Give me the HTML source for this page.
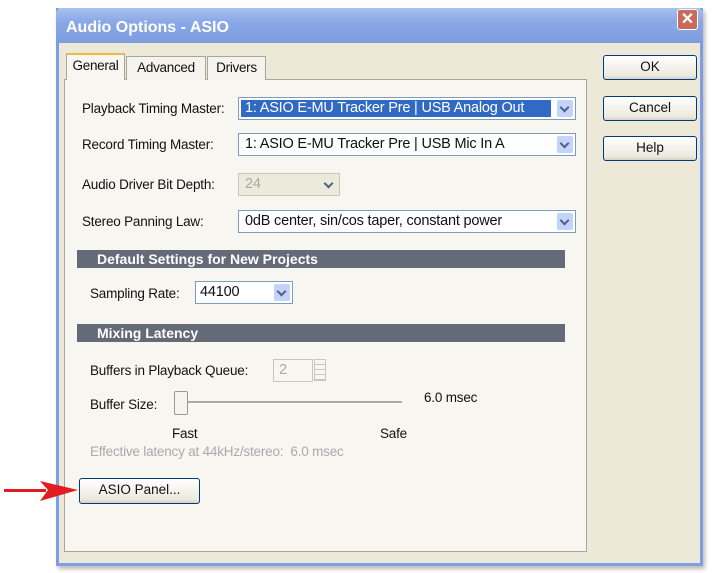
<!DOCTYPE html>
<html><head><style>
body{margin:0;width:715px;height:573px;background:#fff;position:relative;overflow:hidden;font-family:"Liberation Sans",sans-serif;font-size:13.5px;color:#111}
.a{position:absolute}
.dlg{left:56px;top:8px;width:647px;height:558px;background:#ece9d8;border:3px solid #7f9de0;border-top:none;box-sizing:border-box;box-shadow:2px 3px 4px #bbb}
.title{left:56px;top:8px;width:647px;height:35px;background:linear-gradient(#a9c1ef,#8aa8e6 40%,#7d9de0);border-radius:6px 6px 0 0}
.panel{left:64px;top:79px;width:523px;height:473px;background:#f7f6f1;border:1px solid #a8a69a;box-sizing:border-box}
.tab{top:56px;height:24px;background:#f4f3ee;border:1px solid #a8a69a;border-bottom:none;box-sizing:border-box;font-size:13.5px;text-align:center;line-height:22px;letter-spacing:-0.3px}
.sel{height:23px;background:#fff;border:1px solid #7f9db9;box-sizing:border-box;line-height:20px;padding-left:6px;font-size:14.5px;letter-spacing:-0.2px;white-space:nowrap}
.arr{position:absolute;right:2px;top:2px;width:16px;height:17px;background:#c3d3fb;border-radius:2px}
.arr:after{content:"";position:absolute;left:4px;top:4px;width:5px;height:5px;border-right:2px solid #4d6185;border-bottom:2px solid #4d6185;transform:rotate(45deg)}
.btn{height:25px;border:1px solid #003c74;border-radius:3px;background:linear-gradient(#fff,#ece9df 85%,#d6d0c5);box-sizing:border-box;text-align:center;line-height:22px;font-size:13.5px}
.bar{left:77px;width:488px;height:18px;background:#646a78;color:#fff;font-weight:bold;font-size:14px;line-height:18px;padding-left:20px;box-sizing:border-box}
.lbl{font-size:13.5px;letter-spacing:-0.2px;white-space:nowrap}
</style></head><body>
<div class="a dlg"></div>
<div class="a title"></div>
<div class="a" style="left:66px;top:19px;color:#fff;font-weight:bold;font-size:16px">Audio Options - ASIO</div>
<div class="a" style="left:677px;top:9px;width:21px;height:21px;background:#c86a5c;border:1px solid #fff;box-sizing:border-box;border-radius:3px;color:#fff;font-weight:bold;font-size:16px;text-align:center;line-height:19px">✕</div>
<div class="a panel"></div>
<div class="a tab" style="left:66px;top:53px;height:27px;width:59px;background:#f7f6f1;border-top:2px solid #f0b845">General</div>
<div class="a tab" style="left:126px;width:80px">Advanced</div>
<div class="a tab" style="left:207px;width:59px">Drivers</div>
<div class="a btn" style="left:603px;top:55px;width:94px">OK</div>
<div class="a btn" style="left:603px;top:96px;width:94px">Cancel</div>
<div class="a btn" style="left:603px;top:136px;width:94px">Help</div>

<div class="a lbl" style="left:82px;top:101px">Playback Timing Master:</div>
<div class="a sel" style="left:238px;top:97px;width:338px;padding-left:2px"><span style="background:#316ac5;color:#fff;display:inline-block;width:306px;padding-left:4px;line-height:17px;margin-top:1px">1: ASIO E-MU Tracker Pre | USB Analog Out</span><div class="arr"></div></div>
<div class="a lbl" style="left:82px;top:137px">Record Timing Master:</div>
<div class="a sel" style="left:238px;top:133px;width:338px">1: ASIO E-MU Tracker Pre | USB Mic In A<div class="arr"></div></div>
<div class="a lbl" style="left:82px;top:177px">Audio Driver Bit Depth:</div>
<div class="a sel" style="left:238px;top:173px;width:102px;background:#ebeadb;border-color:#c9c7ba;color:#aaa">24<div class="arr" style="background:#ebeadb"></div></div>
<div class="a lbl" style="left:82px;top:214px">Stereo Panning Law:</div>
<div class="a sel" style="left:238px;top:210px;width:338px">0dB center, sin/cos taper, constant power<div class="arr"></div></div>
<div class="a bar" style="top:250px">Default Settings for New Projects</div>
<div class="a lbl" style="left:90px;top:286px">Sampling Rate:</div>
<div class="a sel" style="left:195px;top:281px;width:98px;padding-left:4px">44100<div class="arr"></div></div>
<div class="a bar" style="top:324px">Mixing Latency</div>
<div class="a lbl" style="left:90px;top:363px">Buffers in Playback Queue:</div>
<div class="a sel" style="left:273px;top:359px;width:40px;background:#f7f6f1;border-color:#c9c7ba;color:#aaa;padding-left:5px">2</div>
<div class="a" style="left:314px;top:359px;width:12px;height:22px;border:1px solid #c9c7ba;box-sizing:border-box;background:repeating-linear-gradient(#f7f6f1 0 4px,#c9c7ba 4px 5px)"></div>
<div class="a lbl" style="left:90px;top:397px">Buffer Size:</div>
<div class="a" style="left:187px;top:401px;width:215px;height:2px;background:#aaa;border-bottom:1px solid #fff"></div>
<div class="a" style="left:174px;top:391px;width:12px;height:22px;background:#f4f3ee;border:1px solid #9a9a90;border-radius:2px"></div>
<div class="a lbl" style="left:424px;top:390px">6.0 msec</div>
<div class="a lbl" style="left:172px;top:426px">Fast</div>
<div class="a lbl" style="left:380px;top:426px">Safe</div>
<div class="a lbl" style="left:90px;top:444px;color:#aaa">Effective latency at 44kHz/stereo:&nbsp; 6.0 msec</div>
<div class="a btn" style="left:79px;top:478px;width:121px;height:26px">ASIO Panel...</div>
<div class="a" style="left:4px;top:489px;width:42px;height:3px;background:#e31b23"></div>
<svg class="a" style="left:40px;top:478px" width="40" height="26"><polygon points="0,3 38,12 0,23 8,12" fill="#e31b23"/></svg>
</body></html>
